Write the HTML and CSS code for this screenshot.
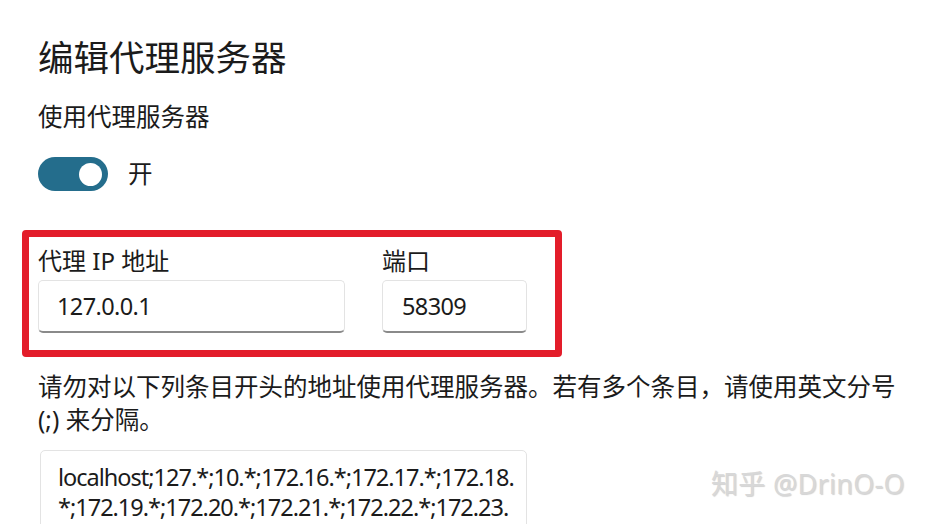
FILE: index.html
```html
<!DOCTYPE html>
<html lang="zh-CN">
<head>
    <meta charset="utf-8">
    <title>编辑代理服务器</title>
    <link rel="stylesheet" href="styles.css">
</head>
<body>
    <div class="page">
        <h1 class="title">编辑代理服务器</h1>
        <div class="subtitle">使用代理服务器</div>
        <div class="toggle-row">
            <span class="toggle"><span class="knob"></span></span>
            <span class="toggle-label">开</span>
        </div>

        <div class="highlight">
            <div class="field">
                <div class="field-label">代理 IP 地址</div>
                <div class="input input-ip">127.0.0.1</div>
            </div>
            <div class="field">
                <div class="field-label">端口</div>
                <div class="input input-port">58309</div>
            </div>
        </div>

        <p class="hint">请勿对以下列条目开头的地址使用代理服务器。若有多个条目，请使用英文分号<br>(;) 来分隔。</p>

        <div class="textarea">
            <div>localhost;127.*;10.*;172.16.*;172.17.*;172.18.</div>
            <div>*;172.19.*;172.20.*;172.21.*;172.22.*;172.23.</div>
        </div>
    </div>

    <div class="watermark">知乎 @DrinO-O</div>
</body>
</html>
```

FILE: styles.css
```css
html, body {
    margin: 0;
    padding: 0;
    background: #ffffff;
    overflow: hidden;
}
body {
    font-family: "Noto Sans", "Noto Sans CJK SC", sans-serif;
    color: #1b1b1b;
    height: 524px;
    position: relative;
}
.page {
    padding: 33px 0 0 38px;
}
.title {
    font-size: 35.5px;
    font-weight: 400;
    line-height: 48px;
    margin: 0;
}
.subtitle {
    font-size: 24.5px;
    line-height: 34px;
    margin-top: 19px;
}
.toggle-row {
    display: flex;
    align-items: center;
    margin-top: 23px;
    height: 34px;
}
.toggle {
    width: 70px;
    height: 34px;
    border-radius: 17px;
    background: #246d8c;
    display: flex;
    align-items: center;
    justify-content: flex-end;
    padding-right: 6px;
    box-sizing: border-box;
}
.knob {
    width: 23px;
    height: 23px;
    border-radius: 50%;
    background: #ffffff;
}
.toggle-label {
    font-size: 24.5px;
    margin-left: 20px;
    line-height: 34px;
}
.highlight {
    display: flex;
    gap: 37px;
    width: 540px;
    box-sizing: border-box;
    margin: 39px 0 0 -16px;
    padding: 7px 28px 17px 9px;
    border: 7px solid #e31d2a;
    border-radius: 4px;
}
.field-label {
    font-size: 24px;
    line-height: 34px;
    margin-bottom: 2px;
}
.input {
    height: 53px;
    box-sizing: border-box;
    border: 1px solid #e3e3e3;
    border-bottom: 2px solid #8a8a8a;
    border-radius: 5px;
    background: #ffffff;
    font-size: 23.5px;
    letter-spacing: -0.6px;
    display: flex;
    align-items: center;
    padding-left: 18px;
}
.input-ip {
    width: 307px;
}
.input-port {
    width: 145px;
    padding-left: 19px;
}
.hint {
    font-size: 24.5px;
    line-height: 33px;
    margin: 13px 0 0;
    white-space: nowrap;
}
.textarea {
    width: 487px;
    height: 100px;
    box-sizing: border-box;
    margin: 14px 0 0 2px;
    border: 1px solid #e3e3e3;
    border-radius: 5px;
    padding: 11px 0 0 17px;
    font-size: 23.5px;
    line-height: 30px;
    letter-spacing: -1px;
    white-space: nowrap;
    overflow: hidden;
}
.watermark {
    position: absolute;
    right: 20px;
    top: 467px;
    font-size: 27px;
    line-height: 34px;
    color: #d8d8d8;
    text-shadow: 1px 1px 1px rgba(0, 0, 0, 0.18);
    letter-spacing: 0.3px;
}
```
